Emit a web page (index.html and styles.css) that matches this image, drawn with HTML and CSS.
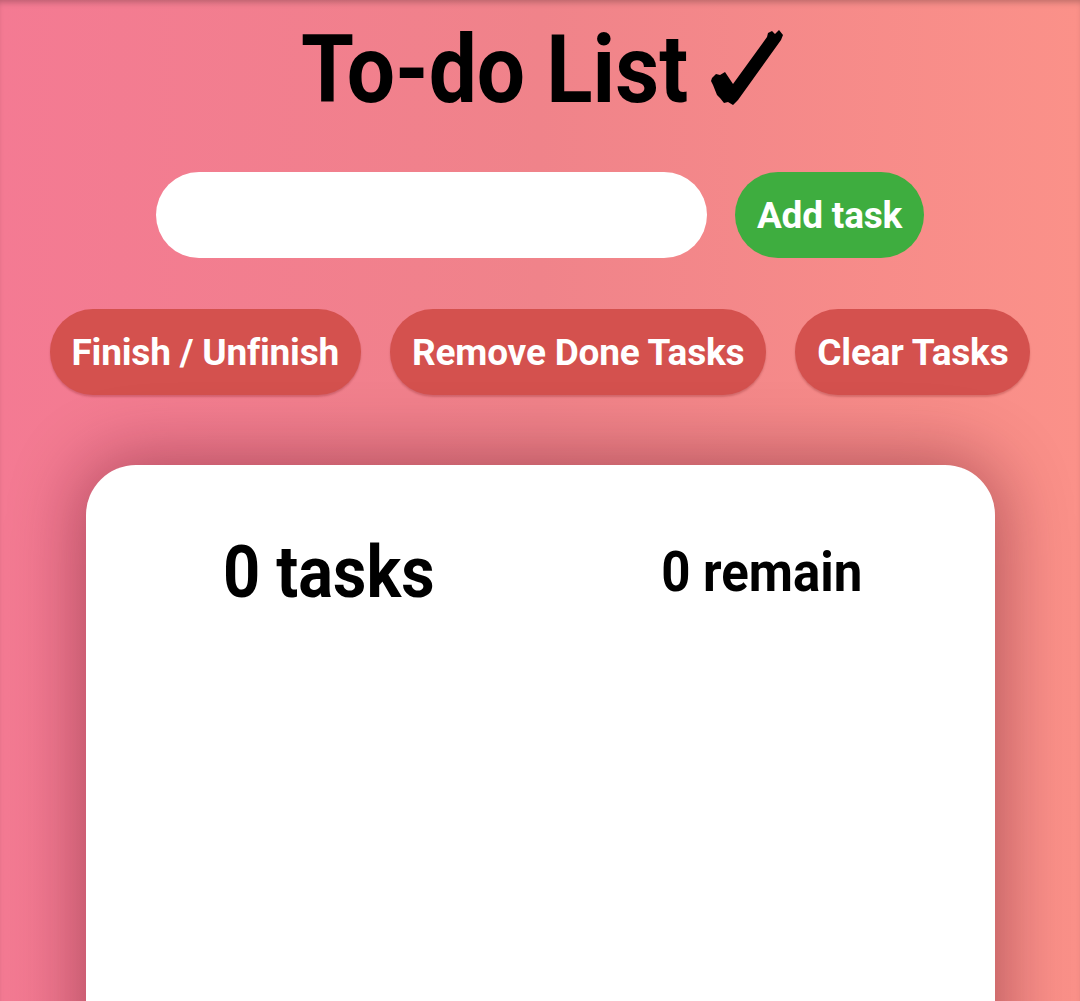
FILE: index.html
```html
<!DOCTYPE html>
<html lang="en">
<head>
<meta charset="utf-8">
<title>To-do List</title>
<link rel="stylesheet" href="styles.css">
</head>
<body>
<main class="app">
  <h1 class="title"><span class="title-text">To-do List</span><svg class="check" viewBox="710 28 75 78" width="75" height="78" aria-label="✓"><path d="M712 78 L716 74 L720 75 L725 72 L733 84 L767 37 L768 33 L772 31 L775 34 L779 30 L783 35 L781 40 L738 100 L733 105 L728 102 L724 103 L720 98 L717 95 L713 85 L711 81 Z" fill="#000"/></svg></h1>
  <div class="add-row">
    <input class="task-input" type="text" aria-label="New task">
    <button class="btn btn-green">Add task</button>
  </div>
  <div class="action-row">
    <button class="btn btn-red">Finish / Unfinish</button>
    <button class="btn btn-red">Remove Done Tasks</button>
    <button class="btn btn-red">Clear Tasks</button>
  </div>
  <section class="card">
    <div class="stats">
      <h2 class="stat stat-total">0 tasks</h2>
      <h3 class="stat stat-remain">0 remain</h3>
    </div>
  </section>
</main>
</body>
</html>
```
FILE: styles.css
```css
html, body {
  margin: 0;
  padding: 0;
  height: 100%;
  overflow: hidden;
}
body {
  background: linear-gradient(to right, #f47a93 0%, #f0838a 50%, #fb9189 100%);
  font-family: Roboto, "Noto Sans", sans-serif;
  box-shadow: inset 0 5px 6px -3px rgba(0,0,0,0.25);
}
.app {
  display: flex;
  flex-direction: column;
  align-items: center;
}
.title {
  margin: 14px 0 0;
  padding-left: 6px;
  font-size: 95px;
  line-height: 112px;
  font-weight: 700;
  color: #000;
  display: flex;
  align-items: flex-start;
  gap: 22px;
}
.title-text {
  display: inline-block;
  transform: scaleX(0.9);
  transform-origin: left center;
  margin-right: -43px;
}
.check {
  display: block;
  margin-top: 14px;
}
.add-row {
  margin-top: 46px;
  display: flex;
  gap: 28px;
}
.task-input {
  width: 551px;
  height: 86px;
  box-sizing: border-box;
  border: none;
  border-radius: 43px;
  background: #fff;
  outline: none;
  padding: 0 30px;
  font-size: 30px;
}
.btn {
  height: 86px;
  border: none;
  border-radius: 43px;
  padding: 0 22px;
  font-family: Roboto, sans-serif;
  font-size: 37px;
  font-weight: 700;
  letter-spacing: -0.2px;
  color: #fff;
}
.btn-green { background: #3ead3f; }
.btn-red {
  background: #d4514e;
  box-shadow: 0 2px 2px rgba(120,20,20,0.25);
}
.action-row {
  margin-top: 51px;
  display: flex;
  gap: 29px;
}
.card {
  margin-top: 70px;
  width: 909px;
  height: 700px;
  background: #fff;
  border-radius: 50px;
  box-shadow: 0 0 70px 5px rgba(90,10,30,0.45);
}
.stats {
  display: grid;
  grid-template-columns: 1fr 1fr;
  padding: 0 16px 0 26px;
  align-items: center;
  margin-top: 64px;
}
.stat {
  margin: 0;
  text-align: center;
  color: #000;
  font-weight: 700;
}
.stat-total { font-size: 73px; line-height: 86px; transform: scaleX(0.89); }
.stat-remain { font-size: 56px; line-height: 66px; transform: scaleX(0.91); }
```
